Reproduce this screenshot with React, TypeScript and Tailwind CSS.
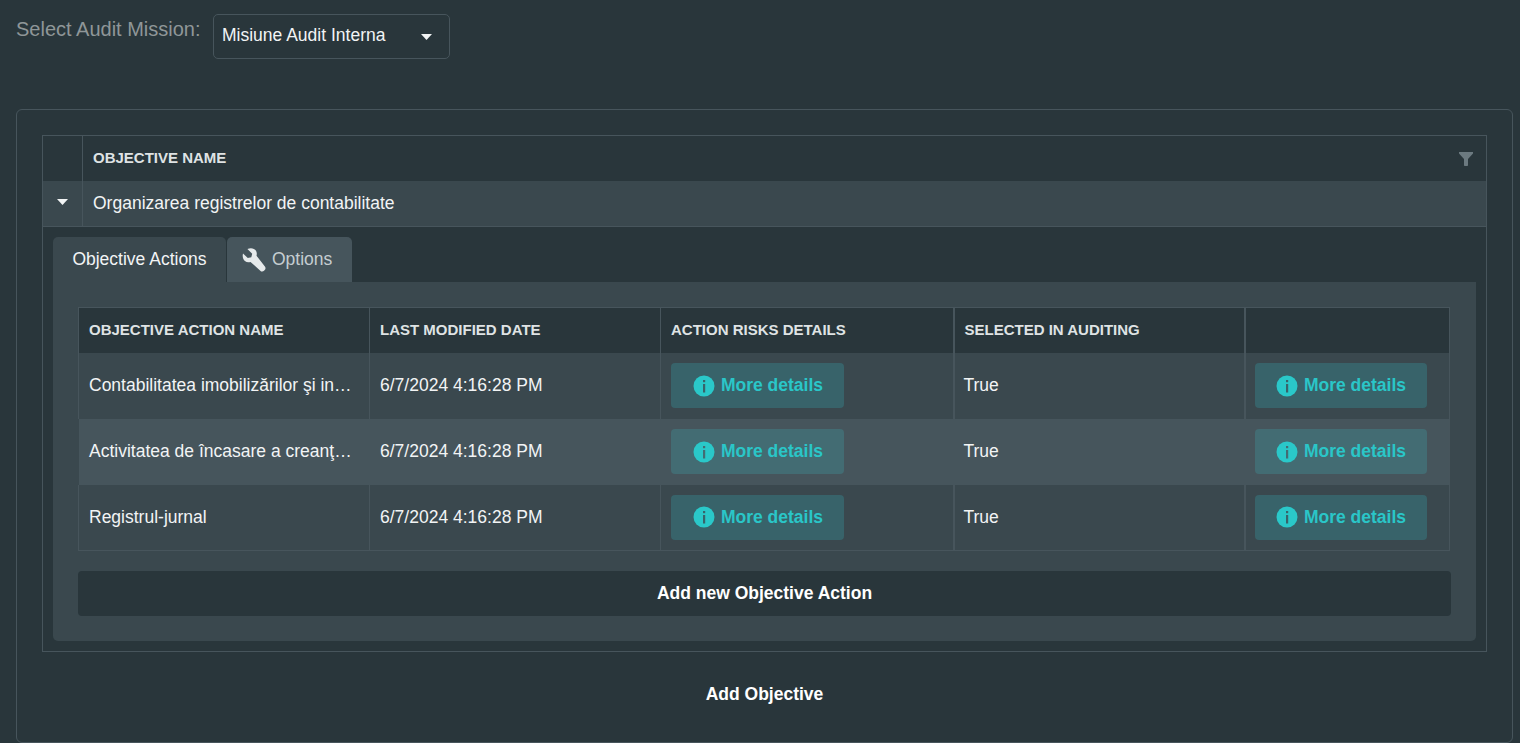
const rows = [
  { name: 'Contabilitatea imobilizărilor şi in…', hover: false },
  { name: 'Activitatea de încasare a creanţ…', hover: true },
  { name: 'Registrul-jurnal', hover: false },
]

const columns = ['Objective Action Name', 'Last Modified Date', 'Action Risks Details', 'Selected in Auditing', '']

function CaretDown({ className }: { className?: string }) {
  return (
    <svg width="11" height="6" viewBox="0 0 11 6" className={className}>
      <path d="M0 0h11L5.5 6z" fill="currentColor" />
    </svg>
  )
}

function InfoIcon({ hover }: { hover: boolean }) {
  const cut = hover ? '#436c73' : '#38636a'
  return (
    <svg width="22" height="22" viewBox="0 0 22 22" className="shrink-0">
      <circle cx="11" cy="11" r="10.500" fill="#2ac8c9" />
      <rect x="10" y="5" width="2.200" height="2.200" fill={cut} />
      <rect x="10" y="9" width="2.200" height="8.500" fill={cut} />
    </svg>
  )
}

function WrenchIcon() {
  return (
    <svg width="24" height="24" viewBox="0 0 24 24" className="shrink-0">
      <path
        d="M1 5.500 5.800 10l3.500-.8.900-3.400L5.400 1C8.800-.6 12.400.2 14 2.800c.9 1.500 1 3.300.5 5l8.400 10.600c.9 1.100.8 2.700-.2 3.700l-.7.700c-1.100 1-2.700 1-3.700-.1L8.500 13.900c-2 .7-4 .4-5.600-.8C1 11.500.2 8.400 1 5.500z"
        fill="#e6eaeb"
      />
    </svg>
  )
}

function FilterIcon() {
  return (
    <svg width="14" height="14" viewBox="0 0 14 14">
      <path d="M0 0h14v1.500L9 7v6.200c0 .5-.3.800-.8.800H5.800c-.5 0-.8-.3-.8-.8V7L0 1.500z" fill="#6c7a80" />
    </svg>
  )
}

function DetailsButton({ hover, narrow }: { hover: boolean; narrow?: boolean }) {
  return (
    <button
      className={`flex h-[45px] items-center justify-center gap-[6px] rounded-[4px] pl-px text-[17.5px] font-bold text-[#2ac6c8] ${
        narrow ? 'w-[172px]' : 'w-[173px]'
      } ${hover ? 'bg-[#436c73]' : 'bg-[#38636a]'}`}
    >
      <InfoIcon hover={hover} />
      More details
    </button>
  )
}

function ActionsTable() {
  return (
    <table className="w-[1371px] table-fixed border-collapse border border-[#47555c] text-[17.5px] text-[#f2f4f5]">
      <colgroup>
        <col className="w-[291px]" />
        <col className="w-[291px]" />
        <col className="w-[293px]" />
        <col className="w-[291px]" />
        <col className="w-[205px]" />
      </colgroup>
      <thead>
        <tr className="h-[45px] bg-[#29363b]">
          {columns.map((col, i) => (
            <th
              key={i}
              className={`border-[#47555c] px-[10px] text-left text-[15px] font-bold uppercase text-[#dfe3e4] ${
                i >= 3 ? 'border-l-2' : 'border-l'
              }`}
            >
              {col}
            </th>
          ))}
        </tr>
      </thead>
      <tbody>
        {rows.map((row) => {
          const line = row.hover ? 'border-transparent' : 'border-[#47555c]'
          return (
            <tr key={row.name} className={row.hover ? 'h-[66px] bg-[#46555c]' : 'h-[66px] bg-[#3a484e]'}>
              <td className={`whitespace-nowrap border-l px-[10px] ${line}`}>{row.name}</td>
              <td className={`border-l px-[10px] ${line}`}>6/7/2024 4:16:28 PM</td>
              <td className={`border-l px-[10px] ${line}`}>
                <DetailsButton hover={row.hover} />
              </td>
              <td className={`border-l-2 pl-[9px] pr-[10px] ${line}`}>True</td>
              <td className={`border-l-2 pl-[9px] pr-[10px] ${line}`}>
                <DetailsButton hover={row.hover} narrow />
              </td>
            </tr>
          )
        })}
      </tbody>
    </table>
  )
}

export default function App() {
  return (
    <div className="h-[743px] overflow-hidden bg-[#29363b] font-['Liberation_Sans',Arial,sans-serif]">
      {/* Mission picker */}
      <div className="flex h-[109px] items-start pl-4 pt-[14px]">
        <span className="mt-[3px] w-[197px] text-[20px] leading-[24px] text-[#8f9698]">Select Audit Mission:</span>
        <div className="flex h-[45px] w-[237px] items-center justify-between rounded-[5px] border border-[#47555c] pb-[2px] pl-2 pr-[17px] text-[17.5px] text-[#f2f4f5]">
          Misiune Audit Interna
          <CaretDown className="mt-[3px] text-[#f2f4f5]" />
        </div>
      </div>

      {/* Objectives card */}
      <div className="ml-4 flex h-[634px] w-[1497px] flex-col rounded-[6px] border border-[#47555c] px-[25px] pt-[25px]">
        <div className="border border-[#47555c]">
          <div className="flex h-[45px] items-center">
            <div className="h-full w-[40px] border-r border-[#47555c]" />
            <span className="flex-1 pl-[10px] text-[15px] font-bold uppercase text-[#dfe3e4]">Objective Name</span>
            <span className="pr-[13px]">
              <FilterIcon />
            </span>
          </div>
          <div className="flex h-[46px] items-center border-b border-[#47555c] bg-[#3a484e] text-[17.5px] text-[#f2f4f5]">
            <div className="flex h-full w-[40px] items-center justify-center border-r border-[#47555c] pb-[3px]">
              <CaretDown />
            </div>
            <span className="pl-[10px]">Organizarea registrelor de contabilitate</span>
          </div>

          {/* Master row detail */}
          <div className="px-[10px] pb-[10px] pt-[10px]">
            <div className="flex h-[45px] items-stretch text-[17.5px]">
              <div className="flex w-[173px] items-center justify-center rounded-t-[5px] bg-[#3a484e] text-[#f2f4f5]">
                Objective Actions
              </div>
              <div className="ml-px flex w-[125px] items-center gap-[6px] rounded-t-[5px] bg-[#46555c] pl-[15px] text-[#c5cdd1]">
                <WrenchIcon />
                Options
              </div>
            </div>
            <div className="flex flex-col gap-5 rounded-b-[5px] bg-[#3a484e] px-[25px] pb-[25px] pt-[25px]">
              <ActionsTable />
              <button className="h-[45px] w-[1373px] rounded-[4px] bg-[#29363b] text-[17.5px] font-bold text-white">
                Add new Objective Action
              </button>
            </div>
          </div>
        </div>
        <button className="mt-[20px] h-[45px] text-[17.5px] font-bold text-white">Add Objective</button>
      </div>
    </div>
  )
}
